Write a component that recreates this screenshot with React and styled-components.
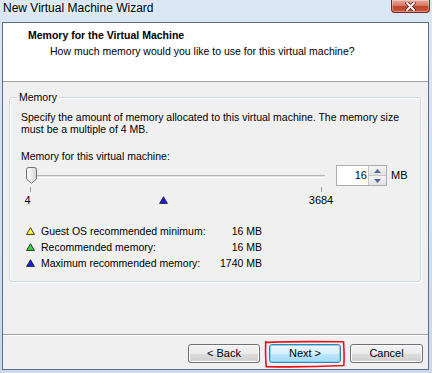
import React from "react";
import styled, { createGlobalStyle } from "styled-components";

const GlobalStyle = createGlobalStyle`
  html, body { margin: 0; padding: 0; }
  body {
    width: 432px; height: 373px; overflow: hidden;
    font-family: "Liberation Sans", Arial, sans-serif;
    font-size: 10.5px; color: #000;
  }
  #root { width: 432px; height: 373px; }
`;

const Frame = styled.div`
  width: 432px; height: 373px; box-sizing: border-box;
  padding: 0 3px 3px 2px;
  display: flex; flex-direction: column;
  background: linear-gradient(180deg, #dbe7f4 0%, #d2e1f1 40%, #c9daee 100%);
`;

const TitleBar = styled.div`
  height: 22px; flex: none;
  display: flex; justify-content: space-between; align-items: flex-start;
`;

const TitleText = styled.div`
  font-size: 12px; line-height: 16px; padding-left: 1px;
  color: #000;
  text-shadow: 0 0 6px rgba(255,255,255,0.9);
`;

const CloseButton = styled.div`
  width: 39px; height: 13px; box-sizing: border-box;
  margin-right: -1px;
  border: 1px solid #6e2a20; border-top: none;
  border-radius: 0 0 4px 4px;
  background: linear-gradient(180deg, #e9a99a 0%, #d47a66 45%, #c0452d 55%, #c85a40 100%);
  display: flex; align-items: center; justify-content: center;
  box-shadow: inset 0 0 0 1px rgba(255,255,255,0.35);
`;

const Client = styled.div`
  flex: 1; display: flex; flex-direction: column;
  border: 1px solid #5e6e82;
  background: #f0f0f0;
`;

const Header = styled.div`
  height: 52px; flex: none;
  background: #fff;
  border-bottom: 1px solid #a0a0a0;
  padding: 6px 0 0 25px;
  box-sizing: content-box;
`;

const HeaderTitle = styled.div`
  font-weight: bold; line-height: 13px;
`;

const HeaderSub = styled.div`
  margin-top: 3px; padding-left: 22px; line-height: 13px;
`;

const Body = styled.div`
  flex: 1; padding: 9px 7px 0 6px;
`;

const Group = styled.fieldset`
  margin: 0; padding: 0 0 10px 0;
  border: 1px solid #cdd7df; border-radius: 3px;
  box-shadow: 1px 1px 0 #fff, inset 1px 1px 0 #fff;
`;

const GroupLabel = styled.legend`
  margin-left: 7px; padding: 0 2px; line-height: 13px;
`;

const Description = styled.div`
  margin-top: 7px; padding-left: 11px;
  line-height: 12px; white-space: nowrap;
`;

const FieldLabel = styled.div`
  margin-top: 15px; padding-left: 11px; line-height: 12px;
`;

const SliderRow = styled.div`
  margin-top: 3px; padding-left: 16px;
  height: 21px; display: flex; align-items: center;
`;

const Slider = styled.div`
  position: relative; width: 304px; height: 21px;
`;

const Track = styled.div`
  position: absolute; left: 2px; right: 5px; top: 10px;
  height: 1px;
  border-top: 1px solid #b4b4b4;
  border-bottom: 1px solid #fff;
  background: #e2e2e2;
`;

const Thumb = styled.svg`
  position: absolute; left: 0; top: 2px;
`;

const Spin = styled.div`
  margin-left: 6px; width: 51px; height: 21px; box-sizing: border-box;
  border: 1px solid #abadb3; background: #fff;
  display: flex;
`;

const SpinValue = styled.div`
  flex: 1; text-align: right; line-height: 19px; padding-right: 1px;
  font-size: 11px;
`;

const SpinButtons = styled.div`
  width: 17px; display: flex; flex-direction: column;
  border-left: 1px solid #c5c8cf;
`;

const SpinButton = styled.div`
  flex: 1; display: flex; align-items: center; justify-content: center;
  background: linear-gradient(180deg, #f4f4f4, #e2e2e2);
  border-top: ${(p) => (p.$down ? "1px solid #c5c8cf" : "none")};
`;

const Unit = styled.div`
  margin-left: 4px; line-height: 19px; font-size: 11px;
`;

const Scale = styled.div`
  position: relative; height: 22px; margin-left: 16px; width: 304px;
`;

const Tick = styled.div`
  position: absolute; top: 1px; width: 1px; height: 5px; background: #a0a0a0;
`;

const ScaleLabel = styled.div`
  position: absolute; top: 8px; line-height: 12px; font-size: 11px;
  transform: translateX(-50%);
`;

const ScaleMarker = styled.svg`
  position: absolute; top: 10px;
`;

const Legend = styled.div`
  margin-top: 15px; margin-left: 16px; width: 236px;
  display: grid; grid-template-columns: 9px 1fr auto;
  column-gap: 6px; grid-auto-rows: 16px; align-items: center;
  white-space: nowrap;
`;

const LegendValue = styled.div`
  text-align: right;
`;

const Footer = styled.div`
  flex: none; height: 25px;
  border-top: 1px solid #a0a0a0;
  box-shadow: inset 0 1px 0 #fff;
  padding: 9px 5px 0 0;
  display: flex; justify-content: flex-end; gap: 9px;
`;

const ButtonWrap = styled.div`
  position: relative;
`;

const Button = styled.div`
  height: 19px; box-sizing: border-box;
  border: 1px solid ${(p) => (p.$default ? "#3c7fb1" : "#707070")};
  border-radius: 3px;
  background: ${(p) =>
    p.$default
      ? "linear-gradient(180deg, #eaf6fd 0%, #d9f0fc 50%, #bee6fd 51%, #a7d9f5 100%)"
      : "linear-gradient(180deg, #f2f2f2 0%, #ebebeb 50%, #dddddd 51%, #cfcfcf 100%)"};
  box-shadow: inset 0 0 0 1px ${(p) => (p.$default ? "#7fd3f7" : "#fcfcfc")};
  display: flex; align-items: center; justify-content: center;
  line-height: 13px; font-size: 11px;
  width: ${(p) => p.$w || 72}px;
`;

const Highlight = styled.svg`
  position: absolute; left: -6px; top: -5px; pointer-events: none;
`;

function Triangle({ color }) {
  return (
    <svg width="9" height="8" viewBox="0 0 9 8">
      <path d="M4.5 0.7 L8.4 7.4 L0.6 7.4 Z" fill={color} stroke="#222" strokeWidth="0.9" strokeLinejoin="round" />
    </svg>
  );
}

const legendRows = [
  { color: "#ffff33", label: "Guest OS recommended minimum:", value: "16 MB" },
  { color: "#33dd33", label: "Recommended memory:", value: "16 MB" },
  { color: "#1a1aee", label: "Maximum recommended memory:", value: "1740 MB" },
];

export default function App() {
  return (
    <>
      <GlobalStyle />
      <Frame>
        <TitleBar>
          <TitleText>New Virtual Machine Wizard</TitleText>
          <CloseButton>
            <svg width="11" height="9" viewBox="0 0 11 9">
              <path d="M2 1 L9 8 M9 1 L2 8" stroke="#5a2018" strokeWidth="3.4" strokeLinecap="round" />
              <path d="M2 1 L9 8 M9 1 L2 8" stroke="#fff" strokeWidth="1.8" strokeLinecap="round" />
            </svg>
          </CloseButton>
        </TitleBar>
        <Client>
          <Header>
            <HeaderTitle>Memory for the Virtual Machine</HeaderTitle>
            <HeaderSub>How much memory would you like to use for this virtual machine?</HeaderSub>
          </Header>
          <Body>
            <Group>
              <GroupLabel>Memory</GroupLabel>
              <Description>
                Specify the amount of memory allocated to this virtual machine. The memory size
                <br />
                must be a multiple of 4 MB.
              </Description>
              <FieldLabel>Memory for this virtual machine:</FieldLabel>
              <SliderRow>
                <Slider>
                  <Track />
                  <Thumb width="11" height="17" viewBox="0 0 11 17">
                    <defs>
                      <linearGradient id="tg" x1="0" y1="0" x2="1" y2="0">
                        <stop offset="0" stopColor="#fbfbfb" />
                        <stop offset="0.5" stopColor="#ececec" />
                        <stop offset="1" stopColor="#d4d4d4" />
                      </linearGradient>
                    </defs>
                    <path d="M0.5 2.5 Q0.5 0.5 2.5 0.5 H8.5 Q10.5 0.5 10.5 2.5 V12 L5.5 16.3 L0.5 12 Z" fill="url(#tg)" stroke="#6f6f6f" />
                  </Thumb>
                </Slider>
                <Spin>
                  <SpinValue>16</SpinValue>
                  <SpinButtons>
                    <SpinButton>
                      <svg width="7" height="4" viewBox="0 0 7 4"><path d="M0 4 L3.5 0 L7 4 Z" fill="#4d6a9a" /></svg>
                    </SpinButton>
                    <SpinButton $down>
                      <svg width="7" height="4" viewBox="0 0 7 4"><path d="M0 0 L3.5 4 L7 0 Z" fill="#4d6a9a" /></svg>
                    </SpinButton>
                  </SpinButtons>
                </Spin>
                <Unit>MB</Unit>
              </SliderRow>
              <Scale>
                <Tick style={{ left: 4 }} />
                <Tick style={{ left: 295 }} />
                <ScaleLabel style={{ left: 1.5 }}>4</ScaleLabel>
                <ScaleMarker style={{ left: 133 }} width="9" height="8" viewBox="0 0 9 8">
                  <path d="M4.5 0.7 L8.4 7.4 L0.6 7.4 Z" fill="#1a1aee" stroke="#222" strokeWidth="0.9" strokeLinejoin="round" />
                </ScaleMarker>
                <ScaleLabel style={{ left: 295 }}>3684</ScaleLabel>
              </Scale>
              <Legend>
                {legendRows.map((r) => (
                  <React.Fragment key={r.label}>
                    <Triangle color={r.color} />
                    <div>{r.label}</div>
                    <LegendValue>{r.value}</LegendValue>
                  </React.Fragment>
                ))}
              </Legend>
            </Group>
          </Body>
          <Footer>
            <Button>&lt; Back</Button>
            <ButtonWrap>
              <Button $default>Next &gt;</Button>
              <Highlight width="84" height="30" viewBox="0 0 84 30">
                <path
                  d="M2.5 3.5 C20 2.2 50 2.5 80.5 2.8 C81 10 81.5 18 80.8 26.5 C60 27.5 30 28.2 3.2 27.6 C2.6 19 2.2 10 2.8 2.5"
                  fill="none" stroke="#e8141a" strokeWidth="1.6" strokeLinecap="round"
                />
              </Highlight>
            </ButtonWrap>
            <Button $w={73}>Cancel</Button>
          </Footer>
        </Client>
      </Frame>
    </>
  );
}
